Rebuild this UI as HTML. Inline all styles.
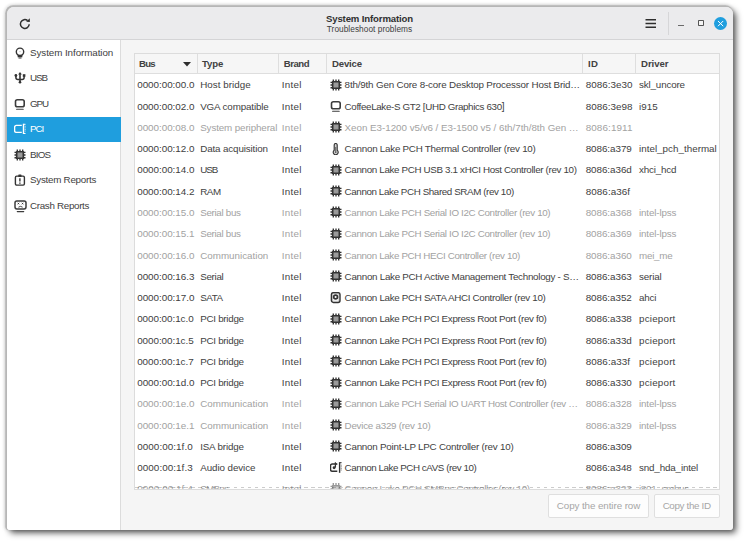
<!DOCTYPE html>
<html><head><meta charset="utf-8"><title>System Information</title>
<style>
html,body{margin:0;padding:0;background:#fff;}
body{width:744px;height:542px;position:relative;overflow:hidden;font-family:"Liberation Sans",sans-serif;font-size:10px;color:#414141;}
.win{position:absolute;left:7px;top:6.6px;width:725.6px;height:523.8px;border-radius:7px 7px 3px 3px;background:#f5f5f5;box-shadow:-0.8px -0.8px 0 0.9px #b6b6b6,-1px -1px 3px 2px rgba(0,0,0,.12),3px 3px 6px 0px rgba(0,0,0,.64);overflow:hidden;}
.inner{position:absolute;left:-1px;top:-1.6px;width:727px;height:526px;}
.hdr{position:absolute;left:0;top:0;width:100%;height:34.4px;background:#ebebed;border-bottom:1px solid #d4d4d6;}
.title{position:absolute;left:0;width:100%;text-align:center;top:8px;font-weight:bold;font-size:10px;line-height:11px;color:#303030;}
.sub{position:absolute;left:0;width:100%;text-align:center;top:18.5px;font-size:8.5px;line-height:10px;color:#404040;}
.side{position:absolute;left:0;top:35.4px;width:114px;height:491px;background:#fff;border-right:1px solid #dcdcdc;}
.si{position:absolute;left:0;width:114.5px;height:24.7px;line-height:24.7px;font-size:10px;color:#414141;}
.si span.lb{position:absolute;left:24px;top:0;}
.si svg{position:absolute;left:7.9px;top:6.2px;}
.si.sel{background:#1f9ede;color:#fff;}
.table{position:absolute;left:128px;top:48px;width:584px;height:434.6px;background:#fff;border:1px solid #dcdcdc;overflow:hidden;box-sizing:content-box;}
.th{position:absolute;top:0;left:0;width:100%;height:19px;background:#f6f6f6;border-bottom:1px solid #dedede;}
.th b{position:absolute;top:0;line-height:19.4px;font-size:10px;color:#414141;}
.th i{position:absolute;top:0;width:1px;height:19px;background:#dedede;}
.row{position:absolute;left:-135px;width:744px;height:21px;line-height:21px;white-space:nowrap;}
.row .c{position:absolute;top:0;}
.kn{font-size:9.8px;font-weight:normal}.kd{font-size:9.9px;font-weight:normal}.kb{font-size:9.6px;font-weight:bold}.ks{font-size:8.3px;font-weight:normal}
.row.dis{color:#a2a2a2;}

.c1{left:137.2px}.c2{left:200.2px}.c3{left:281.8px}.c4{left:344.6px}.c5{left:585.7px}.c6{left:639px}
.ic{position:absolute;left:330.3px;top:4.5px;}
.btn{position:absolute;top:489.4px;height:23.2px;border:1px solid #dfdfdf;background:#fdfdfd;border-radius:2px;box-sizing:border-box;text-align:center;line-height:22.6px;color:#a6a6a6;font-size:10px;}
</style></head><body>
<svg width="0" height="0" style="position:absolute">
<defs>
<g id="i-chip"><path d="M3.3 0.5v11M6 0.5v11M8.7 0.5v11M0.5 3.3h11M0.5 6h11M0.5 8.7h11" stroke="#333" stroke-width="1.35"/><rect x="1.9" y="1.9" width="8.2" height="8.2" rx="0.9" fill="#333"/><rect x="3.5" y="3.5" width="5" height="5" fill="#9a9a9a"/></g>
<g id="i-mon"><rect x="1.5" y="1.7" width="8.7" height="7.1" rx="1.9" fill="none" stroke="#3c3c3c" stroke-width="1.6"/><path d="M2.6 11.3h6.6" stroke="#3c3c3c" stroke-width="1.1" stroke-linecap="round"/></g>
<g id="i-therm"><path d="M4.2 2a1.5 1.5 0 0 1 3 0v5.2a2.5 2.5 0 1 1-3 0z" fill="#d4d4d4" stroke="#333" stroke-width="1.15"/><path d="M5.7 4v4.5" stroke="#555" stroke-width="0.9"/><circle cx="5.7" cy="9.1" r="0.9" fill="#555"/></g>
<g id="i-disk"><rect x="1.45" y="0.7" width="8.5" height="9.7" rx="1.9" fill="none" stroke="#333" stroke-width="1.5"/><rect x="2.6" y="1.9" width="6.2" height="7.3" rx="0.8" fill="none" stroke="#aaa" stroke-width="0.6"/><circle cx="5.6" cy="5" r="1.9" fill="none" stroke="#333" stroke-width="1.7"/></g>
<g id="i-audio"><path d="M7.3 1.9h-5a1.8 1.8 0 0 0-1.8 1.8v3.8a1.8 1.8 0 0 0 1.8 1.8h5" fill="none" stroke="#333" stroke-width="1.5"/><path d="M5.4 0.4v5.2" stroke="#333" stroke-width="1.3"/><path d="M5.4 0.3l2 2.2h-2z" fill="#333"/><circle cx="4.1" cy="5.7" r="1.45" fill="#333"/><path d="M9.6 0.2v10.6" stroke="#333" stroke-width="1.4"/><path d="M9.6 0.7h2" stroke="#333" stroke-width="1"/><path d="M10.6 3.2h1.2M10.6 4.8h1.2M10.6 6.4h1.2M10.6 8h1.2" stroke="#888" stroke-width="1"/></g>
<g id="i-bulb"><circle cx="6" cy="4.8" r="3.7" fill="none" stroke="#333" stroke-width="1.4"/><path d="M4.3 7.9v1.6h3.4v-1.6" fill="none" stroke="#333" stroke-width="1.3"/><path d="M4.5 11h3" stroke="#333" stroke-width="1.2"/><path d="M5.3 4.6h1.4" stroke="#bbb" stroke-width="0.8"/></g>
<g id="i-usb"><path d="M6 1.5v9" stroke="#333" stroke-width="1.6"/><path d="M6 0l1.9 2.6h-3.8z" fill="#333"/><path d="M1.9 3.6v1.8a2 2 0 0 0 2 2h4.2a2 2 0 0 0 2-2v-1.8" fill="none" stroke="#333" stroke-width="1.5"/><circle cx="1.9" cy="3.5" r="1.4" fill="#333"/><rect x="8.8" y="2.2" width="2.6" height="2.6" fill="#333"/><circle cx="6" cy="10.3" r="1.3" fill="#333"/></g>
<g id="i-pci"><path d="M7.8 2.4h-5.5a1.7 1.7 0 0 0-1.7 1.7v3.6a1.7 1.7 0 0 0 1.7 1.7h5.5" fill="none" stroke="#fff" stroke-width="1.4"/><path d="M9.5 0.8v10.2" stroke="#fff" stroke-width="1.4"/><path d="M9.5 1.3h2M9.5 10.5h2" stroke="#fff" stroke-width="1"/><path d="M10.6 3.3h1.2M10.6 4.9h1.2M10.6 6.5h1.2M10.6 8.1h1.2" stroke="#a8d8f2" stroke-width="1"/></g>
<g id="i-rep"><rect x="1.4" y="2.1" width="9" height="9" rx="1.3" fill="none" stroke="#333" stroke-width="1.4"/><rect x="4.3" y="0.4" width="3.2" height="2.6" rx="0.6" fill="#333"/><path d="M5.9 4.2v3.4M5.9 8.5v1.3" stroke="#333" stroke-width="1.4"/></g>
<g id="i-crash"><rect x="1" y="0.9" width="11" height="8" rx="1.8" fill="none" stroke="#3c3c3c" stroke-width="1.5"/><path d="M3.3 11.6h6.4" stroke="#3c3c3c" stroke-width="1.2" stroke-linecap="round"/><path d="M3.7 2.8l1.5 1.5M5.2 2.8l-1.5 1.5M7.8 2.8l1.5 1.5M9.3 2.8l-1.5 1.5" stroke="#333" stroke-width="0.9"/><path d="M4.4 7.2q2.1-1.7 4.2 0" stroke="#333" stroke-width="0.9" fill="none"/></g>
</defs></svg>
<div class="win"><div class="inner">
 <div class="hdr">
  <svg style="position:absolute;left:12.2px;top:12px" width="14" height="14" viewBox="0 0 14 14"><path d="M11.2 7.2a4.4 4.4 0 1 1-1.6-3.6" fill="none" stroke="#2e2e2e" stroke-width="1.5"/><path d="M8.2 4.8l3.6 0.2l0-3.8z" fill="#2e2e2e"/></svg>
  <div class="title"><span class="kb" style="letter-spacing:-0.135px">System Information</span></div>
  <div class="sub"><span class="ks" style="letter-spacing:0.040px">Troubleshoot problems</span></div>
  <svg style="position:absolute;left:639px;top:13px" width="12" height="11" viewBox="0 0 12 11"><path d="M0.5 1.8h10.5M0.5 5.5h10.5M0.5 9.2h10.5" stroke="#2e2e2e" stroke-width="1.5"/></svg>
  <div style="position:absolute;left:662px;top:7px;width:1px;height:23px;background:#d6d6d8"></div>
  <div style="position:absolute;left:672.3px;top:19.6px;width:5.6px;height:1.2px;background:#6a6a6a"></div>
  <div style="position:absolute;left:692px;top:15.3px;width:3.8px;height:3.8px;border:1px solid #555;border-radius:0.8px;background:#f4f4f4"></div>
  <div style="position:absolute;left:707.9px;top:11.9px;width:13.2px;height:13.2px;border-radius:50%;background:#1f9ede"></div>
  <svg style="position:absolute;left:707.9px;top:11.9px" width="13.2" height="13.2" viewBox="0 0 13.2 13.2"><path d="M4 4l5.2 5.2M9.2 4l-5.2 5.2" stroke="#fff" stroke-width="1"/></svg>
 </div>
 <div class="side">
  <div class="si" style="top:0.4px"><svg class="sic" width="12" height="12" viewBox="0 0 12 12"><use href="#i-bulb"/></svg><span class="lb"><span class="kn" style="letter-spacing:-0.064px">System Information</span></span></div>
  <div class="si" style="top:25.9px"><svg class="sic" width="12" height="12" viewBox="0 0 12 12"><use href="#i-usb"/></svg><span class="lb"><span class="kn" style="letter-spacing:-1.013px">USB</span></span></div>
  <div class="si" style="top:51.4px"><svg class="sic" width="12" height="12" viewBox="0 0 12 12"><use href="#i-mon"/></svg><span class="lb"><span class="kn" style="letter-spacing:-1.113px">GPU</span></span></div>
  <div class="si sel" style="top:76.9px"><svg class="sic" width="13" height="12" viewBox="0 0 13 12"><use href="#i-pci"/></svg><span class="lb"><span class="kn" style="letter-spacing:-1.039px">PCI</span></span></div>
  <div class="si" style="top:102.4px"><svg class="sic" width="12" height="12" viewBox="0 0 12 12"><use href="#i-chip"/></svg><span class="lb"><span class="kn" style="letter-spacing:-0.798px">BIOS</span></span></div>
  <div class="si" style="top:127.9px"><svg class="sic" width="12" height="12" viewBox="0 0 12 12"><use href="#i-rep"/></svg><span class="lb"><span class="kn" style="letter-spacing:-0.255px">System Reports</span></span></div>
  <div class="si" style="top:153.4px"><svg class="sic" width="13" height="13" viewBox="0 0 13 13"><use href="#i-crash"/></svg><span class="lb"><span class="kn" style="letter-spacing:-0.311px">Crash Reports</span></span></div>
 </div>
 <div class="table">
  <div class="row" style="top:20.35px"><span class="c c1"><span class="kd" style="letter-spacing:-0.042px">0000:00:00.0</span></span><span class="c c2"><span class="kn" style="letter-spacing:0.044px">Host bridge</span></span><span class="c c3"><span class="kn" style="letter-spacing:0.304px">Intel</span></span><span class="c c4"><span class="kn" style="letter-spacing:-0.166px">8th/9th Gen Core 8-core Desktop Processor Host Brid…</span></span><span class="c c5"><span class="kd" style="letter-spacing:0.018px">8086:3e30</span></span><span class="c c6"><span class="kn" style="letter-spacing:-0.149px">skl_uncore</span></span><svg class="ic" width="12" height="12" viewBox="0 0 12 12"><use href="#i-chip"/></svg></div>
<div class="row" style="top:41.62px"><span class="c c1"><span class="kd" style="letter-spacing:-0.042px">0000:00:02.0</span></span><span class="c c2"><span class="kn" style="letter-spacing:-0.128px">VGA compatible</span></span><span class="c c3"><span class="kn" style="letter-spacing:0.304px">Intel</span></span><span class="c c4"><span class="kn" style="letter-spacing:-0.353px">CoffeeLake-S GT2 [UHD Graphics 630</span>]</span><span class="c c5"><span class="kd" style="letter-spacing:0.018px">8086:3e98</span></span><span class="c c6"><span class="kn" style="letter-spacing:0.035px">i915</span></span><svg class="ic" width="12" height="12" viewBox="0 0 12 12"><use href="#i-mon"/></svg></div>
<div class="row dis" style="top:62.89px"><span class="c c1"><span class="kd" style="letter-spacing:-0.042px">0000:00:08.0</span></span><span class="c c2"><span class="kn" style="letter-spacing:-0.115px">System peripheral</span></span><span class="c c3"><span class="kn" style="letter-spacing:0.304px">Intel</span></span><span class="c c4"><span class="kn" style="letter-spacing:-0.025px">Xeon E3-1200 v5/v6 / E3-1500 v5 / 6th/7th/8th Gen …</span></span><span class="c c5"><span class="kd" style="letter-spacing:0.099px">8086:1911</span></span><svg class="ic" width="12" height="12" viewBox="0 0 12 12"><use href="#i-chip"/></svg></div>
<div class="row" style="top:84.16px"><span class="c c1"><span class="kd" style="letter-spacing:-0.042px">0000:00:12.0</span></span><span class="c c2"><span class="kn" style="letter-spacing:-0.127px">Data acquisition</span></span><span class="c c3"><span class="kn" style="letter-spacing:0.304px">Intel</span></span><span class="c c4"><span class="kn" style="letter-spacing:-0.253px">Cannon Lake PCH Thermal Controller (rev 10)</span></span><span class="c c5"><span class="kd" style="letter-spacing:-0.071px">8086:a379</span></span><span class="c c6"><span class="kn" style="letter-spacing:0.027px">intel_pch_thermal</span></span><svg class="ic" width="12" height="12" viewBox="0 0 12 12"><use href="#i-therm"/></svg></div>
<div class="row" style="top:105.43px"><span class="c c1"><span class="kd" style="letter-spacing:-0.042px">0000:00:14.0</span></span><span class="c c2"><span class="kn" style="letter-spacing:-1.013px">USB</span></span><span class="c c3"><span class="kn" style="letter-spacing:0.304px">Intel</span></span><span class="c c4"><span class="kn" style="letter-spacing:-0.338px">Cannon Lake PCH USB 3.1 xHCI Host Controller (rev 10)</span></span><span class="c c5"><span class="kd" style="letter-spacing:-0.071px">8086:a36d</span></span><span class="c c6"><span class="kn" style="letter-spacing:-0.166px">xhci_hcd</span></span><svg class="ic" width="12" height="12" viewBox="0 0 12 12"><use href="#i-chip"/></svg></div>
<div class="row" style="top:126.70px"><span class="c c1"><span class="kd" style="letter-spacing:-0.042px">0000:00:14.2</span></span><span class="c c2"><span class="kn" style="letter-spacing:-0.444px">RAM</span></span><span class="c c3"><span class="kn" style="letter-spacing:0.304px">Intel</span></span><span class="c c4"><span class="kn" style="letter-spacing:-0.396px">Cannon Lake PCH Shared SRAM (rev 10)</span></span><span class="c c5"><span class="kd" style="letter-spacing:0.058px">8086:a36f</span></span><svg class="ic" width="12" height="12" viewBox="0 0 12 12"><use href="#i-chip"/></svg></div>
<div class="row dis" style="top:147.97px"><span class="c c1"><span class="kd" style="letter-spacing:-0.042px">0000:00:15.0</span></span><span class="c c2"><span class="kn" style="letter-spacing:-0.312px">Serial bus</span></span><span class="c c3"><span class="kn" style="letter-spacing:0.304px">Intel</span></span><span class="c c4"><span class="kn" style="letter-spacing:-0.336px">Cannon Lake PCH Serial IO I2C Controller (rev 10)</span></span><span class="c c5"><span class="kd" style="letter-spacing:-0.071px">8086:a368</span></span><span class="c c6"><span class="kn" style="letter-spacing:-0.133px">intel-lpss</span></span><svg class="ic" width="12" height="12" viewBox="0 0 12 12"><use href="#i-chip"/></svg></div>
<div class="row dis" style="top:169.24px"><span class="c c1"><span class="kd" style="letter-spacing:-0.042px">0000:00:15.1</span></span><span class="c c2"><span class="kn" style="letter-spacing:-0.312px">Serial bus</span></span><span class="c c3"><span class="kn" style="letter-spacing:0.304px">Intel</span></span><span class="c c4"><span class="kn" style="letter-spacing:-0.336px">Cannon Lake PCH Serial IO I2C Controller (rev 10)</span></span><span class="c c5"><span class="kd" style="letter-spacing:-0.071px">8086:a369</span></span><span class="c c6"><span class="kn" style="letter-spacing:-0.133px">intel-lpss</span></span><svg class="ic" width="12" height="12" viewBox="0 0 12 12"><use href="#i-chip"/></svg></div>
<div class="row dis" style="top:190.51px"><span class="c c1"><span class="kd" style="letter-spacing:-0.042px">0000:00:16.0</span></span><span class="c c2"><span class="kn" style="letter-spacing:0.005px">Communication</span></span><span class="c c3"><span class="kn" style="letter-spacing:0.304px">Intel</span></span><span class="c c4"><span class="kn" style="letter-spacing:-0.352px">Cannon Lake PCH HECI Controller (rev 10)</span></span><span class="c c5"><span class="kd" style="letter-spacing:-0.071px">8086:a360</span></span><span class="c c6"><span class="kn" style="letter-spacing:-0.234px">mei_me</span></span><svg class="ic" width="12" height="12" viewBox="0 0 12 12"><use href="#i-chip"/></svg></div>
<div class="row" style="top:211.78px"><span class="c c1"><span class="kd" style="letter-spacing:-0.042px">0000:00:16.3</span></span><span class="c c2"><span class="kn" style="letter-spacing:-0.287px">Serial</span></span><span class="c c3"><span class="kn" style="letter-spacing:0.304px">Intel</span></span><span class="c c4"><span class="kn" style="letter-spacing:-0.274px">Cannon Lake PCH Active Management Technology - S…</span></span><span class="c c5"><span class="kd" style="letter-spacing:-0.071px">8086:a363</span></span><span class="c c6"><span class="kn" style="letter-spacing:-0.143px">serial</span></span><svg class="ic" width="12" height="12" viewBox="0 0 12 12"><use href="#i-chip"/></svg></div>
<div class="row" style="top:233.05px"><span class="c c1"><span class="kd" style="letter-spacing:-0.042px">0000:00:17.0</span></span><span class="c c2"><span class="kn" style="letter-spacing:-0.395px">SATA</span></span><span class="c c3"><span class="kn" style="letter-spacing:0.304px">Intel</span></span><span class="c c4"><span class="kn" style="letter-spacing:-0.320px">Cannon Lake PCH SATA AHCI Controller (rev 10)</span></span><span class="c c5"><span class="kd" style="letter-spacing:-0.071px">8086:a352</span></span><span class="c c6"><span class="kn" style="letter-spacing:-0.217px">ahci</span></span><svg class="ic" width="12" height="12" viewBox="0 0 12 12"><use href="#i-disk"/></svg></div>
<div class="row" style="top:254.32px"><span class="c c1"><span class="kd" style="letter-spacing:-0.061px">0000:00:1c.0</span></span><span class="c c2"><span class="kn" style="letter-spacing:-0.273px">PCI bridge</span></span><span class="c c3"><span class="kn" style="letter-spacing:0.304px">Intel</span></span><span class="c c4"><span class="kn" style="letter-spacing:-0.322px">Cannon Lake PCH PCI Express Root Port (rev f0)</span></span><span class="c c5"><span class="kd" style="letter-spacing:-0.071px">8086:a338</span></span><span class="c c6"><span class="kn" style="letter-spacing:0.213px">pcieport</span></span><svg class="ic" width="12" height="12" viewBox="0 0 12 12"><use href="#i-chip"/></svg></div>
<div class="row" style="top:275.59px"><span class="c c1"><span class="kd" style="letter-spacing:-0.061px">0000:00:1c.5</span></span><span class="c c2"><span class="kn" style="letter-spacing:-0.273px">PCI bridge</span></span><span class="c c3"><span class="kn" style="letter-spacing:0.304px">Intel</span></span><span class="c c4"><span class="kn" style="letter-spacing:-0.322px">Cannon Lake PCH PCI Express Root Port (rev f0)</span></span><span class="c c5"><span class="kd" style="letter-spacing:-0.071px">8086:a33d</span></span><span class="c c6"><span class="kn" style="letter-spacing:0.213px">pcieport</span></span><svg class="ic" width="12" height="12" viewBox="0 0 12 12"><use href="#i-chip"/></svg></div>
<div class="row" style="top:296.86px"><span class="c c1"><span class="kd" style="letter-spacing:-0.061px">0000:00:1c.7</span></span><span class="c c2"><span class="kn" style="letter-spacing:-0.273px">PCI bridge</span></span><span class="c c3"><span class="kn" style="letter-spacing:0.304px">Intel</span></span><span class="c c4"><span class="kn" style="letter-spacing:-0.322px">Cannon Lake PCH PCI Express Root Port (rev f0)</span></span><span class="c c5"><span class="kd" style="letter-spacing:0.058px">8086:a33f</span></span><span class="c c6"><span class="kn" style="letter-spacing:0.213px">pcieport</span></span><svg class="ic" width="12" height="12" viewBox="0 0 12 12"><use href="#i-chip"/></svg></div>
<div class="row" style="top:318.13px"><span class="c c1"><span class="kd" style="letter-spacing:-0.042px">0000:00:1d.0</span></span><span class="c c2"><span class="kn" style="letter-spacing:-0.273px">PCI bridge</span></span><span class="c c3"><span class="kn" style="letter-spacing:0.304px">Intel</span></span><span class="c c4"><span class="kn" style="letter-spacing:-0.322px">Cannon Lake PCH PCI Express Root Port (rev f0)</span></span><span class="c c5"><span class="kd" style="letter-spacing:-0.071px">8086:a330</span></span><span class="c c6"><span class="kn" style="letter-spacing:0.213px">pcieport</span></span><svg class="ic" width="12" height="12" viewBox="0 0 12 12"><use href="#i-chip"/></svg></div>
<div class="row dis" style="top:339.40px"><span class="c c1"><span class="kd" style="letter-spacing:-0.042px">0000:00:1e.0</span></span><span class="c c2"><span class="kn" style="letter-spacing:0.005px">Communication</span></span><span class="c c3"><span class="kn" style="letter-spacing:0.304px">Intel</span></span><span class="c c4"><span class="kn" style="letter-spacing:-0.351px">Cannon Lake PCH Serial IO UART Host Controller (rev …</span></span><span class="c c5"><span class="kd" style="letter-spacing:-0.071px">8086:a328</span></span><span class="c c6"><span class="kn" style="letter-spacing:-0.133px">intel-lpss</span></span><svg class="ic" width="12" height="12" viewBox="0 0 12 12"><use href="#i-chip"/></svg></div>
<div class="row dis" style="top:360.67px"><span class="c c1"><span class="kd" style="letter-spacing:-0.042px">0000:00:1e.1</span></span><span class="c c2"><span class="kn" style="letter-spacing:0.005px">Communication</span></span><span class="c c3"><span class="kn" style="letter-spacing:0.304px">Intel</span></span><span class="c c4"><span class="kn" style="letter-spacing:-0.251px">Device a329 (rev 10)</span></span><span class="c c5"><span class="kd" style="letter-spacing:-0.071px">8086:a329</span></span><span class="c c6"><span class="kn" style="letter-spacing:-0.133px">intel-lpss</span></span><svg class="ic" width="12" height="12" viewBox="0 0 12 12"><use href="#i-chip"/></svg></div>
<div class="row" style="top:381.94px"><span class="c c1"><span class="kd" style="letter-spacing:0.055px">0000:00:1f.0</span></span><span class="c c2"><span class="kn" style="letter-spacing:-0.165px">ISA bridge</span></span><span class="c c3"><span class="kn" style="letter-spacing:0.304px">Intel</span></span><span class="c c4"><span class="kn" style="letter-spacing:-0.232px">Cannon Point-LP LPC Controller (rev 10)</span></span><span class="c c5"><span class="kd" style="letter-spacing:-0.071px">8086:a309</span></span><svg class="ic" width="12" height="12" viewBox="0 0 12 12"><use href="#i-chip"/></svg></div>
<div class="row" style="top:403.21px"><span class="c c1"><span class="kd" style="letter-spacing:0.055px">0000:00:1f.3</span></span><span class="c c2"><span class="kn" style="letter-spacing:-0.073px">Audio device</span></span><span class="c c3"><span class="kn" style="letter-spacing:0.304px">Intel</span></span><span class="c c4"><span class="kn" style="letter-spacing:-0.446px">Cannon Lake PCH cAVS (rev 10)</span></span><span class="c c5"><span class="kd" style="letter-spacing:-0.071px">8086:a348</span></span><span class="c c6"><span class="kn" style="letter-spacing:-0.145px">snd_hda_intel</span></span><svg class="ic" width="12" height="12" viewBox="0 0 12 12"><use href="#i-audio"/></svg></div>
<div class="row" style="top:424.48px"><span class="c c1"><span class="kd" style="letter-spacing:0.055px">0000:00:1f.4</span></span><span class="c c2"><span class="kn" style="letter-spacing:-0.714px">SMBus</span></span><span class="c c3"><span class="kn" style="letter-spacing:0.304px">Intel</span></span><span class="c c4"><span class="kn" style="letter-spacing:-0.305px">Cannon Lake PCH SMBus Controller (rev 10)</span></span><span class="c c5"><span class="kd" style="letter-spacing:-0.071px">8086:a323</span></span><span class="c c6"><span class="kn" style="letter-spacing:-0.304px">i801_smbus</span></span><svg class="ic" width="12" height="12" viewBox="0 0 12 12"><use href="#i-chip"/></svg></div>
  <div style="position:absolute;left:0;bottom:0;width:100%;height:5px;background:rgba(255,255,255,.5)"></div>
  <div style="position:absolute;left:0;bottom:0.8px;width:100%;height:1px;background:repeating-linear-gradient(90deg,rgba(0,0,0,.2) 0,rgba(0,0,0,.2) 3.5px,transparent 3.5px,transparent 7.05px)"></div>
  <div class="th">
   <b style="left:4px"><span class="kb" style="letter-spacing:-0.747px">Bus</span></b><svg style="position:absolute;left:48.3px;top:7.8px" width="8" height="5" viewBox="0 0 8 5"><path d="M0 0h8l-4 4.5z" fill="#2e2e2e"/></svg><i style="left:62px"></i>
   <b style="left:67px"><span class="kb" style="letter-spacing:-0.123px">Type</span></b><i style="left:143.3px"></i>
   <b style="left:148.7px"><span class="kb" style="letter-spacing:-0.446px">Brand</span></b><i style="left:191.3px"></i>
   <b style="left:197px"><span class="kb" style="letter-spacing:-0.185px">Device</span></b><i style="left:447px"></i>
   <b style="left:453px"><span class="kb" style="letter-spacing:0.306px">ID</span></b><i style="left:500px"></i>
   <b style="left:506px"><span class="kb" style="letter-spacing:-0.043px">Driver</span></b>
  </div>
 </div>
 <div class="btn" style="left:542.4px;width:100.2px"><span class="kn" style="letter-spacing:-0.083px">Copy the entire row</span></div>
 <div class="btn" style="left:647.7px;width:65.9px"><span class="kn" style="letter-spacing:-0.338px">Copy the ID</span></div>
</div></div>
</body></html>
